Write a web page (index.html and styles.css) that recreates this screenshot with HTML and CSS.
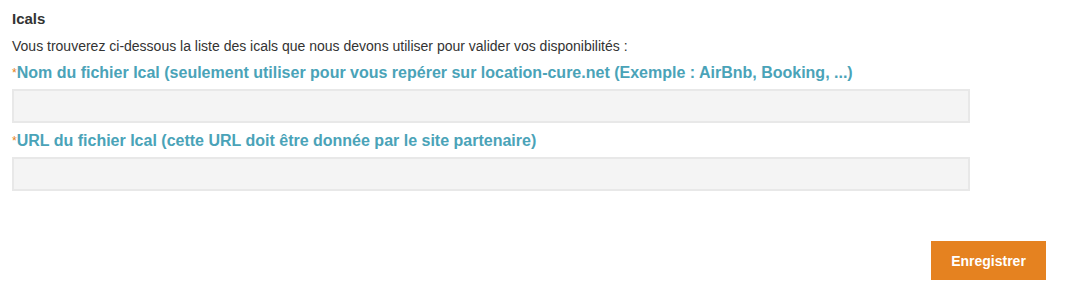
FILE: index.html
```html
<!DOCTYPE html>
<html lang="fr">
<head>
  <meta charset="UTF-8" />
  <meta name="viewport" content="width=device-width, initial-scale=1" />
  <title>Icals</title>
  <link rel="stylesheet" href="styles.css">
</head>
<body>
  <div class="container">
    <h3>Icals</h3>
    <p class="intro">Vous trouverez ci-dessous la liste des icals que nous devons utiliser pour valider vos disponibilités :</p>

    <div class="input-group">
      <label for="nom"><span class="requis">*</span>Nom du fichier Ical (seulement utiliser pour vous repérer sur location-cure.net (Exemple : AirBnb, Booking, ...)</label>
      <input type="text" id="nom">
    </div>

    <div class="input-group">
      <label for="url"><span class="requis">*</span>URL du fichier Ical (cette URL doit être donnée par le site partenaire)</label>
      <input type="text" id="url">
    </div>

    <div class="actions">
      <button id="btnEnregistrer">Enregistrer</button>
    </div>
  </div>
</body>
</html>
```

FILE: styles.css
```css
:root {
  --bleu: #4aa3b8;
  --orange: #e58220;
  --gris-champ: #f4f4f4;
  --gris-bord: #e8e8e8;
  --texte: #333;
}

body {
  font-family: "Liberation Sans", Arial, sans-serif;
  margin: 0;
  padding: 0 12px;
  background: #fff;
  color: var(--texte);
}

.container {
  padding-top: 10px;
}

h3 {
  margin: 0;
  font-size: 15px;
  line-height: 18px;
  font-weight: bold;
  color: var(--texte);
}

.intro {
  margin: 9px 0 0;
  font-size: 14px;
  line-height: 18px;
}

.input-group {
  width: 958px;
  margin-top: 8px;
}

.input-group label {
  display: block;
  font-weight: bold;
  font-size: 16px;
  line-height: 20px;
  color: var(--bleu);
  margin-bottom: 6px;
}

.requis {
  color: var(--orange);
  font-size: 12px;
  vertical-align: top;
  font-weight: normal;
}

.input-group input {
  display: block;
  width: 100%;
  height: 34px;
  box-sizing: border-box;
  border: 2px solid var(--gris-bord);
  background: var(--gris-champ);
  padding: 6px;
}

.actions {
  display: flex;
  justify-content: flex-end;
  margin-top: 50px;
  padding-right: 27px;
}

#btnEnregistrer {
  width: 115px;
  height: 39px;
  border: none;
  background-color: var(--orange);
  color: #fff;
  font-family: inherit;
  font-size: 14px;
  font-weight: bold;
  cursor: pointer;
}
```
